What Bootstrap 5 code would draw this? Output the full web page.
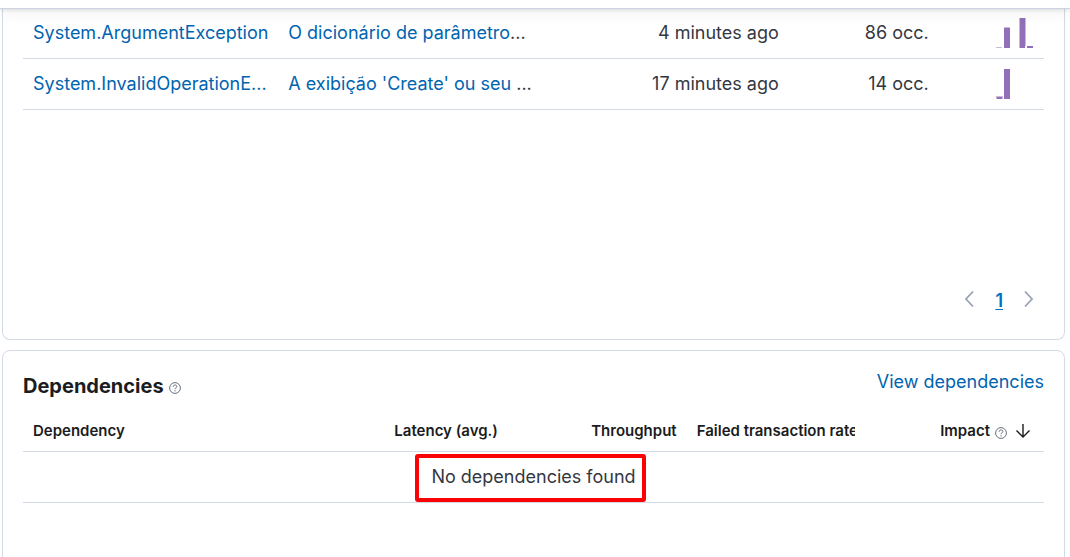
<!DOCTYPE html>
<html lang="en">
<head>
<meta charset="utf-8">
<meta name="viewport" content="width=device-width, initial-scale=1">
<title>Service overview</title>
<link href="https://cdn.jsdelivr.net/npm/bootstrap@5.3.0/dist/css/bootstrap.min.css" rel="stylesheet">
<style>
  body { font: 18px/30px Inter, "Liberation Sans", sans-serif; color: #343741; background: #fff; overflow: hidden; }
  a { color: #0064b0; text-decoration: none; }
  a:hover { text-decoration: underline; }
  .top-bar { height: 8px; background: #fff; z-index: 5; box-shadow: 0 1px 0 #cdd3e3, 0 2px 4px rgba(0,0,0,.12), 0 4px 16px rgba(0,0,0,.08); }
  .page-body { padding: 0 5px 0 2px; }
  .panel { border: 1px solid #d3dae6; border-radius: 8px; padding: 20px; }
  .panel-errors { border-top: 0; border-top-left-radius: 0; border-top-right-radius: 0; padding-top: 0; padding-bottom: 23px; }
  .panel-deps { margin-top: 10px; padding-top: 16px; padding-bottom: 80px; }
  .grid-table { table-layout: fixed; width: 100%; margin: 0; border-collapse: separate; border-spacing: 0; }
  .grid-table th, .grid-table td { border-bottom: 1px solid #d3dae6; padding: 10px; white-space: nowrap; height: 51px; vertical-align: top; }
  .grid-table th { font-size: 15px; line-height: 20px; font-weight: 600; color: #1a1c21; height: 41px; }
  .cell-clip { overflow: hidden; }
  .col-wide { width: 25%; }
  .col-occ { width: 150px; }
  .col-dep { width: 30%; }
  .spark { display: block; margin-left: auto; }
  .pager { margin-top: 172px; padding-right: 8px; }
  .pager button { border: 0; background: none; padding: 0; width: 14px; height: 30px; line-height: 0; }
  .pager a { font-weight: 600; color: #0071c2; text-decoration: underline; text-decoration-thickness: 1px; text-underline-offset: 2px; margin: 4px 19px 0; }
  h2 { font-size: 20px; line-height: 30px; font-weight: 700; color: #1a1c21; margin: 4px 0 0; }
  .deps-head { height: 44px; }
  .callout-box { position: absolute; inset: -8px -10px -10px -16px; border: 4px solid #fb0207; border-radius: 3px; }
</style>
</head>
<body>
<header class="top-bar position-relative"></header>
<main class="page-body">
  <section class="panel panel-errors" aria-label="Errors">
    <table class="grid-table">
      <colgroup><col class="col-wide"><col class="col-wide"><col class="col-wide"><col class="col-occ"><col></colgroup>
      <tbody>
        <tr>
          <td><a href="#">System.ArgumentException</a></td>
          <td><a href="#">O dicionário de parâmetro</a>...</td>
          <td class="text-end">4 minutes ago</td>
          <td class="text-end">86 occ.</td>
          <td><svg class="spark" width="38" height="30" viewBox="0 0 38 30" fill="#9170b8"><path fill="#cbb9dc" d="M0 29h6v1H0zM8 9h6v1H8zM23 0h1v30h-1zM29 0h1v28h-1z"/><path d="M8 10h6v20H8zM24 0h5v30h-5zM31 28h6v2h-6z"/></svg></td>
        </tr>
        <tr>
          <td><a href="#">System.InvalidOperationE...</a></td>
          <td><a href="#">A exibição 'Create' ou seu</a> ...</td>
          <td class="text-end">17 minutes ago</td>
          <td class="text-end">14 occ.</td>
          <td><svg class="spark" width="38" height="30" viewBox="0 0 38 30" fill="#9170b8"><path fill="#cbb9dc" d="M0 27h7v3H0z"/><path d="M1 28h5v2H1zM8 0h6v30H8z"/></svg></td>
        </tr>
      </tbody>
    </table>
    <nav class="pager d-flex justify-content-end align-items-center" aria-label="Pages">
      <button type="button" aria-label="Previous page"><svg width="14" height="18" viewBox="0 0 14 18" fill="none" stroke="#98a2b3" stroke-width="1.8"><path d="M11 1.500 4 9l7 7.500"/></svg></button>
      <a href="#">1</a>
      <button type="button" aria-label="Next page"><svg width="14" height="18" viewBox="0 0 14 18" fill="none" stroke="#98a2b3" stroke-width="1.8"><path d="M3 1.500 10 9l-7 7.500"/></svg></button>
    </nav>
  </section>

  <section class="panel panel-deps">
    <div class="deps-head d-flex justify-content-between align-items-start">
      <div class="d-flex align-items-center gap-1">
        <h2>Dependencies</h2>
        <svg class="mt-2" width="14" height="12" viewBox="-1 0 14 12" fill="none" stroke="#69707d"><circle cx="6" cy="6" r="5.400"/><path d="M4.100 4.800C4.100 2.400 7.900 2.400 7.900 4.600 7.900 5.800 6 5.700 6 7.200M6 8.200v1.200"/></svg>
      </div>
      <a href="#">View dependencies</a>
    </div>
    <table class="grid-table">
      <colgroup><col class="col-dep"><col><col><col><col></colgroup>
      <thead>
        <tr>
          <th>Dependency</th>
          <th class="text-end">Latency (avg.)</th>
          <th class="text-end">Throughput</th>
          <th><div class="cell-clip">Failed transaction rate</div></th>
          <th><div class="d-flex justify-content-end align-items-center">Impact
            <svg class="ms-1 mt-1" width="14" height="12" viewBox="-1 0 14 12" fill="none" stroke="#69707d"><circle cx="6" cy="6" r="5.400"/><path d="M4.100 4.800C4.100 2.400 7.900 2.400 7.900 4.600 7.900 5.800 6 5.700 6 7.200M6 8.200v1.200"/></svg>
            <svg class="ms-2 me-1" width="14" height="14" viewBox="0 0 14 14" fill="none" stroke="#1a1c21" stroke-width="1.400"><path d="M7 0v12.500M.5 6.500 7 13l6.500-6.500"/></svg>
          </div></th>
        </tr>
      </thead>
      <tbody>
        <tr><td colspan="5" class="text-center"><span class="position-relative d-inline-block">No dependencies found<span class="callout-box"></span></span></td></tr>
      </tbody>
    </table>
  </section>
</main>
<script src="https://cdn.jsdelivr.net/npm/bootstrap@5.3.0/dist/js/bootstrap.bundle.min.js"></script>
</body>
</html>
